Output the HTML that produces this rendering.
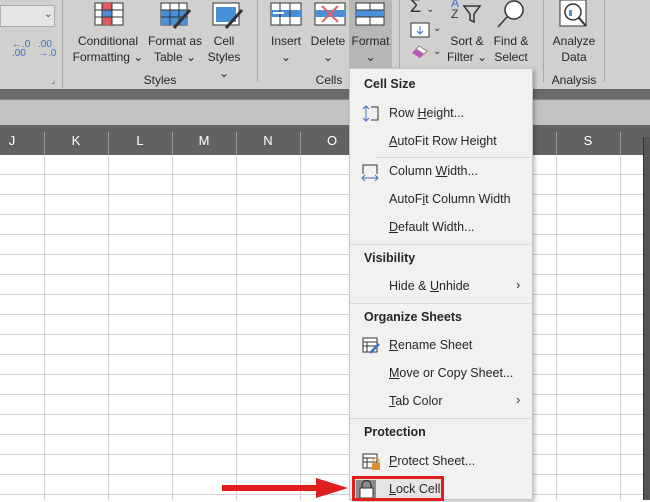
<!DOCTYPE html>
<html><head><style>
*{margin:0;padding:0;box-sizing:border-box}
body{width:650px;height:500px;overflow:hidden;position:relative;font-family:"Liberation Sans",sans-serif;background:#fff}
.a{position:absolute}
.rb{left:0;top:0;width:650px;height:90px;background:#d2d0ce}
.lbl{font-size:12px;color:#262626;text-align:center;line-height:16px}
.sep{width:1px;background:#aaa8a6}
.col{top:125px;height:30px;background:#626262;width:650px}
.ch{color:#fff;font-size:13px;top:133px;width:64px;text-align:center}
.vl{width:1px;background:#d4d4d4;top:155px;height:345px}
.hl{height:1px;background:#d4d4d4;left:0;width:650px}
.menu{left:349px;top:68px;width:184px;height:432px;background:#f2f1f0;border:1px solid #c6c6c6;box-shadow:2px 2px 4px rgba(0,0,0,.25)}
.mi{font-size:12.5px;color:#262626;left:39px}
.mh{font-size:12.5px;font-weight:bold;color:#262626;left:14px}
.ms{left:25px;width:158px;height:1px;background:#d8d8d8}
u{text-decoration:underline}
</style></head><body>
<div class="a rb"></div>
<div class="a" style="left:0;top:5px;width:55px;height:22px;background:#e6e5e4;border:1px solid #b0aeac"></div>
<div class="a" style="left:44px;top:9px;font-size:10px;color:#444">⌄</div>
<div class="a" style="left:12px;top:40px;font-size:10px;color:#3a6fc4;line-height:9px">←.0<br>.00</div>
<div class="a" style="left:38px;top:40px;font-size:10px;color:#3a6fc4;line-height:9px">.00<br>→.0</div>
<div class="a" style="left:51px;top:75px;font-size:9px;color:#555">⌟</div>
<div class="a sep" style="left:62px;top:0;height:88px"></div>
<svg class="a" style="left:94px;top:2px" width="30" height="24"><rect x="1" y="1" width="28" height="22" fill="#fff" stroke="#333"/><rect x="8" y="1" width="10" height="7" fill="#e05a5a"/><rect x="8" y="8" width="10" height="7" fill="#4a90d9"/><rect x="8" y="15" width="10" height="8" fill="#e05a5a"/><path d="M8 1V23M18 1V23M1 8H29M1 15H29" stroke="#333"/></svg>
<svg class="a" style="left:160px;top:2px" width="32" height="28"><rect x="1" y="1" width="26" height="22" fill="#fff" stroke="#333"/><rect x="1" y="8" width="26" height="15" fill="#4a90d9"/><path d="M10 1V23M19 1V23M1 8H27M1 15H27" stroke="#333"/><path d="M14 26L30 8" stroke="#333" stroke-width="3"/></svg>
<svg class="a" style="left:212px;top:2px" width="32" height="28"><rect x="1" y="1" width="26" height="22" fill="#fff" stroke="#333"/><rect x="4" y="5" width="20" height="15" fill="#4a90d9"/><path d="M14 26L30 8" stroke="#333" stroke-width="3"/></svg>
<div class="a lbl" style="left:70px;top:33px;width:76px">Conditional<br>Formatting ⌄</div>
<div class="a lbl" style="left:145px;top:33px;width:60px">Format as<br>Table ⌄</div>
<div class="a lbl" style="left:203px;top:33px;width:42px">Cell<br>Styles ⌄</div>
<div class="a lbl" style="left:140px;top:72px;width:40px">Styles</div>
<div class="a sep" style="left:257px;top:0;height:82px"></div>
<svg class="a" style="left:270px;top:2px" width="32" height="24"><rect x="1" y="1" width="30" height="22" fill="#fff" stroke="#333"/><rect x="1" y="8" width="30" height="7" fill="#4a90d9"/><path d="M10 1V23M20 1V23" stroke="#333"/><path d="M3 11H14" stroke="#fff" stroke-width="2"/></svg>
<svg class="a" style="left:314px;top:2px" width="32" height="24"><rect x="1" y="1" width="30" height="22" fill="#fff" stroke="#333"/><rect x="1" y="8" width="30" height="7" fill="#4a90d9"/><path d="M8 4L24 20M24 4L8 20" stroke="#e06060" stroke-width="2"/></svg>
<div class="a" style="left:349px;top:0;width:43px;height:68px;background:#b9b7b5"></div>
<svg class="a" style="left:355px;top:2px" width="32" height="24"><rect x="1" y="1" width="28" height="22" fill="#fff" stroke="#333"/><rect x="1" y="8" width="28" height="7" fill="#4a90d9"/><path d="M1 8H29M1 15H29M15 1V8M15 15V23" stroke="#333"/></svg>
<div class="a lbl" style="left:266px;top:33px;width:40px">Insert<br>⌄</div>
<div class="a lbl" style="left:308px;top:33px;width:40px">Delete<br>⌄</div>
<div class="a lbl" style="left:349px;top:33px;width:43px">Format<br>⌄</div>
<div class="a lbl" style="left:312px;top:72px;width:34px">Cells</div>
<div class="a sep" style="left:399px;top:0;height:82px"></div>
<div class="a" style="left:410px;top:-4px;font-size:18px;color:#333">Σ <span style="font-size:10px">⌄</span></div>
<svg class="a" style="left:410px;top:22px" width="20" height="16"><rect x="1" y="1" width="18" height="14" fill="#fff" stroke="#333"/><path d="M10 4V12M7 9L10 12L13 9" stroke="#3a6fc4" fill="none"/></svg>
<div class="a" style="left:433px;top:23px;font-size:10px;color:#333">⌄</div>
<svg class="a" style="left:410px;top:44px" width="20" height="16"><path d="M2 9L9 2L17 7L10 14Z" fill="#c050c0"/><path d="M9 2L17 7L14 10L6 5Z" fill="#fff" stroke="#888"/></svg>
<div class="a" style="left:433px;top:46px;font-size:10px;color:#333">⌄</div>
<div class="a" style="left:451px;top:-2px;font-size:12px;color:#3a6fc4;line-height:11px">A<br><span style="color:#333">Z</span></div>
<svg class="a" style="left:462px;top:4px" width="20" height="20"><path d="M2 2H18L12 10V18L8 16V10Z" fill="none" stroke="#333" stroke-width="1.5"/></svg>
<svg class="a" style="left:494px;top:0" width="34" height="30"><circle cx="20" cy="10" r="9" fill="#fff" stroke="#333" stroke-width="1.5"/><path d="M13 17L4 27" stroke="#333" stroke-width="1.5"/></svg>
<div class="a lbl" style="left:444px;top:33px;width:46px">Sort &amp;<br>Filter ⌄</div>
<div class="a lbl" style="left:488px;top:33px;width:46px">Find &amp;<br>Select ⌄</div>
<div class="a sep" style="left:543px;top:0;height:82px"></div>
<svg class="a" style="left:558px;top:0" width="32" height="30"><rect x="2" y="0" width="26" height="26" fill="#fff" stroke="#333"/><circle cx="15" cy="12" r="8" fill="#fff" stroke="#333" stroke-width="1.5"/><rect x="11" y="10" width="3" height="6" fill="#4a90d9"/><path d="M21 18L28 26" stroke="#333" stroke-width="2"/></svg>
<div class="a lbl" style="left:548px;top:33px;width:52px">Analyze<br>Data</div>
<div class="a lbl" style="left:548px;top:72px;width:52px">Analysis</div>
<div class="a sep" style="left:604px;top:0;height:82px"></div>
<div class="a" style="left:0;top:89px;width:650px;height:10px;background:#6a6a6a"></div>
<div class="a" style="left:0;top:99px;width:650px;height:26px;background:#c2c2c2;border-top:1px solid #8a8a8a"></div>
<div class="a col"></div>
<div class="a ch" style="left:-20px">J</div>
<div class="a ch" style="left:44px">K</div>
<div class="a ch" style="left:108px">L</div>
<div class="a ch" style="left:172px">M</div>
<div class="a ch" style="left:236px">N</div>
<div class="a ch" style="left:300px">O</div>
<div class="a ch" style="left:556px">S</div>
<div class="a" style="left:44px;top:132px;width:1px;height:23px;background:#999"></div>
<div class="a" style="left:108px;top:132px;width:1px;height:23px;background:#999"></div>
<div class="a" style="left:172px;top:132px;width:1px;height:23px;background:#999"></div>
<div class="a" style="left:236px;top:132px;width:1px;height:23px;background:#999"></div>
<div class="a" style="left:300px;top:132px;width:1px;height:23px;background:#999"></div>
<div class="a" style="left:556px;top:132px;width:1px;height:23px;background:#999"></div>
<div class="a" style="left:620px;top:132px;width:1px;height:23px;background:#999"></div>
<div class="a vl" style="left:44px"></div><div class="a vl" style="left:108px"></div><div class="a vl" style="left:172px"></div><div class="a vl" style="left:236px"></div><div class="a vl" style="left:300px"></div><div class="a vl" style="left:556px"></div><div class="a vl" style="left:620px"></div>
<div class="a hl" style="top:174px"></div><div class="a hl" style="top:194px"></div><div class="a hl" style="top:214px"></div><div class="a hl" style="top:234px"></div><div class="a hl" style="top:254px"></div><div class="a hl" style="top:274px"></div><div class="a hl" style="top:294px"></div><div class="a hl" style="top:314px"></div><div class="a hl" style="top:334px"></div><div class="a hl" style="top:354px"></div><div class="a hl" style="top:374px"></div><div class="a hl" style="top:394px"></div><div class="a hl" style="top:414px"></div><div class="a hl" style="top:434px"></div><div class="a hl" style="top:454px"></div><div class="a hl" style="top:474px"></div><div class="a hl" style="top:494px"></div>
<div class="a" style="left:643px;top:137px;width:7px;height:363px;background:#555;border-left:1px solid #333"></div>
<svg class="a" style="left:220px;top:474px" width="130" height="28"><path d="M2 11H96V4L128 14L96 24V17H2Z" fill="#e01e1e"/></svg>
<div class="a menu">
<div class="a mh" style="top:8px">Cell Size</div>
<svg class="a" style="left:12px;top:36px" width="18" height="18"><path d="M4 1V16M1 4L4 1L7 4M1 13L4 16L7 13" stroke="#3a6fc4" fill="none"/><path d="M9 2H16V15H9" stroke="#333" fill="none"/></svg>
<div class="a mi" style="top:37px">Row <u>H</u>eight...</div>
<div class="a mi" style="top:65px"><u>A</u>utoFit Row Height</div>
<div class="a ms" style="top:88px"></div>
<svg class="a" style="left:11px;top:94px" width="20" height="18"><path d="M2 11V2H16V11" stroke="#333" fill="none"/><path d="M1 15H17M4 12L1 15L4 18M14 12L17 15L14 18" stroke="#3a6fc4" fill="none"/></svg>
<div class="a mi" style="top:95px">Column <u>W</u>idth...</div>
<div class="a mi" style="top:123px">AutoF<u>i</u>t Column Width</div>
<div class="a mi" style="top:151px"><u>D</u>efault Width...</div>
<div class="a ms" style="top:175px;left:0;width:183px"></div>
<div class="a mh" style="top:182px">Visibility</div>
<div class="a mi" style="top:210px">Hide &amp; <u>U</u>nhide</div>
<div class="a" style="left:166px;top:208px;font-size:13px;color:#333">›</div>
<div class="a ms" style="top:234px;left:0;width:183px"></div>
<div class="a mh" style="top:241px">Organize Sheets</div>
<svg class="a" style="left:12px;top:268px" width="20" height="18"><rect x="1" y="1" width="14" height="14" fill="#fff" stroke="#333"/><path d="M1 5H15M1 9H15M5 5V15" stroke="#333"/><path d="M8 16L17 7" stroke="#3a6fc4" stroke-width="2.5"/></svg>
<div class="a mi" style="top:269px"><u>R</u>ename Sheet</div>
<div class="a mi" style="top:297px"><u>M</u>ove or Copy Sheet...</div>
<div class="a mi" style="top:325px"><u>T</u>ab Color</div>
<div class="a" style="left:166px;top:323px;font-size:13px;color:#333">›</div>
<div class="a ms" style="top:349px;left:0;width:183px"></div>
<div class="a mh" style="top:356px">Protection</div>
<svg class="a" style="left:12px;top:384px" width="20" height="18"><rect x="1" y="1" width="14" height="14" fill="#fff" stroke="#333"/><path d="M1 5H15M1 9H15M5 5V15" stroke="#333"/><rect x="10" y="10" width="8" height="7" fill="#d9902a"/><path d="M11 10V8A3 3 0 0 1 17 8V10" stroke="#d9902a" fill="none"/></svg>
<div class="a mi" style="top:385px"><u>P</u>rotect Sheet...</div>
<div class="a" style="left:2px;top:407px;width:92px;height:25px;border:3px solid #e01e1e;background:#e6e5e4"></div>
<div class="a" style="left:6px;top:411px;width:20px;height:18px;background:#8c8c8c"></div>
<svg class="a" style="left:8px;top:411px" width="18" height="18"><rect x="2" y="8" width="13" height="10" fill="#fff" stroke="#333"/><path d="M4 8V5A4.5 4.5 0 0 1 13 5V8" stroke="#333" fill="none" stroke-width="1.3"/></svg>
<div class="a mi" style="top:413px"><u>L</u>ock Cell</div>
</div>
</body></html>
